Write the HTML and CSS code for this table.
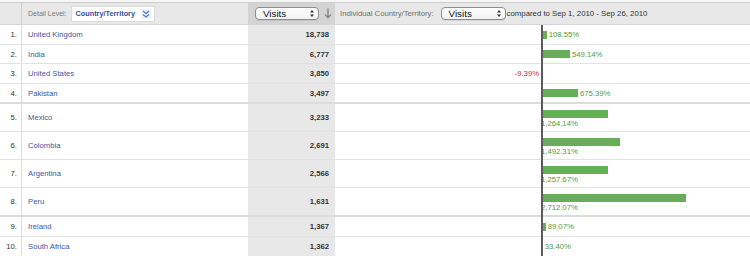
FILE: index.html
```html
<!DOCTYPE html>
<html>
<head>
<meta charset="utf-8">
<link rel="stylesheet" href="styles.css">
</head>
<body>
<div class="report">
  <div class="strip"></div>
  <div class="row head">
    <div class="c-idx"></div>
    <div class="c-name head-name">
      <span class="muted">Detail Level:</span>
      <span class="detail-box">Country/Territory
        <svg class="chev" width="10" height="10" viewBox="0 0 10 10"><path d="M2 2 L5 4.5 L8 2 M2 5.5 L5 8 L8 5.5" fill="none" stroke="#5577cc" stroke-width="1.3"/></svg>
      </span>
    </div>
    <div class="c-val head-val">
      <span class="select wide">Visits<svg class="updown" width="6" height="9" viewBox="0 0 6 9"><path d="M1 3.5 L3 1 L5 3.5 Z M1 5.5 L3 8 L5 5.5 Z" fill="#333"/></svg></span>
      <svg class="sortarrow" width="8" height="11" viewBox="0 0 8 11"><path d="M4 0.5 V9.5 M1 6.5 L4 9.8 L7 6.5" fill="none" stroke="#888" stroke-width="1.4"/></svg>
    </div>
    <div class="c-chart head-chart">
      <span class="muted2">Individual Country/Territory:</span>
      <span class="select narrow">Visits<svg class="updown" width="6" height="9" viewBox="0 0 6 9"><path d="M1 3.5 L3 1 L5 3.5 Z M1 5.5 L3 8 L5 5.5 Z" fill="#333"/></svg></span>
      <span class="cmp">compared to Sep 1, 2010 - Sep 26, 2010</span>
    </div>
  </div>

  <div class="row h20">
    <div class="c-idx">1.</div><div class="c-name">United Kingdom</div><div class="c-val">18,738</div>
    <div class="c-chart"><div class="neg"></div><div class="pos inline"><span class="bar" style="width:5.8px"></span><span class="pct">108.55%</span></div></div>
  </div>
  <div class="row h19">
    <div class="c-idx">2.</div><div class="c-name">India</div><div class="c-val">6,777</div>
    <div class="c-chart"><div class="neg"></div><div class="pos inline"><span class="bar" style="width:29px"></span><span class="pct">549.14%</span></div></div>
  </div>
  <div class="row h20">
    <div class="c-idx">3.</div><div class="c-name">United States</div><div class="c-val">3,850</div>
    <div class="c-chart"><div class="neg"><span class="npct">-9.39%</span></div><div class="pos inline"></div></div>
  </div>
  <div class="row h20 thick">
    <div class="c-idx">4.</div><div class="c-name">Pakistan</div><div class="c-val">3,497</div>
    <div class="c-chart"><div class="neg"></div><div class="pos inline"><span class="bar" style="width:37px"></span><span class="pct">675.39%</span></div></div>
  </div>
  <div class="row h28">
    <div class="c-idx">5.</div><div class="c-name">Mexico</div><div class="c-val">3,233</div>
    <div class="c-chart"><div class="neg"></div><div class="pos stack"><span class="bar" style="width:67px"></span><span class="pct">1,264.14%</span></div></div>
  </div>
  <div class="row h28">
    <div class="c-idx">6.</div><div class="c-name">Colombia</div><div class="c-val">2,691</div>
    <div class="c-chart"><div class="neg"></div><div class="pos stack"><span class="bar" style="width:79px"></span><span class="pct">1,492.31%</span></div></div>
  </div>
  <div class="row h28">
    <div class="c-idx">7.</div><div class="c-name">Argentina</div><div class="c-val">2,566</div>
    <div class="c-chart"><div class="neg"></div><div class="pos stack"><span class="bar" style="width:67px"></span><span class="pct">1,257.67%</span></div></div>
  </div>
  <div class="row h29 thick">
    <div class="c-idx">8.</div><div class="c-name">Peru</div><div class="c-val">1,631</div>
    <div class="c-chart"><div class="neg"></div><div class="pos stack"><span class="bar" style="width:145px"></span><span class="pct">2,712.07%</span></div></div>
  </div>
  <div class="row h20">
    <div class="c-idx">9.</div><div class="c-name">Ireland</div><div class="c-val">1,367</div>
    <div class="c-chart"><div class="neg"></div><div class="pos inline"><span class="bar" style="width:4.7px"></span><span class="pct">89.07%</span></div></div>
  </div>
  <div class="row h20">
    <div class="c-idx">10.</div><div class="c-name">South Africa</div><div class="c-val">1,362</div>
    <div class="c-chart"><div class="neg"></div><div class="pos inline"><span class="bar" style="width:1.8px"></span><span class="pct">33.40%</span></div></div>
  </div>

  <div class="axis"></div>
</div>
</body>
</html>
```

FILE: styles.css
```css
html, body {
  margin: 0;
  padding: 0;
  background: #fff;
}
body {
  font-family: "Liberation Sans", Arial, sans-serif;
  font-size: 7.7px;
  color: #333;
  width: 750px;
  height: 256px;
  overflow: hidden;
}
.report {
  position: relative;
  width: 750px;
}
.strip {
  height: 3px;
  background: #f6f6f6;
  border-bottom: 1px solid #cfcfcf;
  box-sizing: border-box;
}
.row {
  display: grid;
  grid-template-columns: 22px 226px 87px 415px;
  border-bottom: 1px solid #e2e2e2;
  box-sizing: border-box;
}
.row.thick {
  border-bottom: 2px solid #dcdcdc;
}
.h19 { height: 19px; }
.h20 { height: 20px; }
.h28 { height: 28px; }
.h29 { height: 29px; }

.c-idx {
  border-right: 1px solid #dcdcdc;
  display: flex;
  align-items: center;
  justify-content: flex-end;
  padding-right: 4px;
  box-sizing: border-box;
  color: #333;
}
.c-name {
  display: flex;
  align-items: center;
  padding-left: 6px;
  color: #3a58a0;
}
.c-val {
  background: #e8e8e8;
  display: flex;
  align-items: center;
  justify-content: flex-end;
  padding-right: 6px;
  font-weight: bold;
  color: #333;
}
.c-chart {
  display: grid;
  grid-template-columns: 206px 1fr;
}
.neg {
  display: flex;
  align-items: center;
  justify-content: flex-end;
  padding-right: 2px;
}
.npct {
  color: #b8354f;
}
.pos.inline {
  display: flex;
  align-items: center;
  gap: 2px;
}
.pos.stack {
  display: flex;
  flex-direction: column;
  align-items: flex-start;
  padding-top: 6px;
}
.bar {
  display: block;
  height: 8px;
  background: #66ae58;
  flex: none;
}
.pct {
  color: #4c9c3e;
  line-height: 11px;
}

/* header */
.row.head {
  height: 22px;
  background: #e8e8e8;
  border-bottom: 1px solid #d6d6d6;
}
.head .c-idx {
  border-right: 1px solid #d2d2d2;
}
.head-name {
  color: #777;
  gap: 4px;
}
.muted { color: #7a7a7a; font-size: 7px; }
.detail-box {
  display: flex;
  align-items: center;
  gap: 6px;
  height: 16px;
  box-sizing: border-box;
  background: #fff;
  border: 1px solid #dcdcdc;
  padding: 0 3px 0 4px;
  color: #34509a;
  font-weight: bold;
  font-size: 7.3px;
}
.chev {
  background: #eef2fb;
}
.head-val {
  background: #d4d4d4;
  justify-content: flex-start;
  padding-left: 7px;
  padding-right: 0;
  gap: 5px;
  font-weight: normal;
}
.select {
  display: flex;
  align-items: center;
  justify-content: space-between;
  height: 13px;
  box-sizing: border-box;
  background: linear-gradient(#ffffff, #f2f2f2);
  border: 1px solid #8e8e8e;
  border-radius: 4px;
  font-size: 9.8px;
  color: #111;
  padding: 0 3px 0 7px;
  box-shadow: 0 1px 0 rgba(0,0,0,0.08);
}
.select.wide { width: 64px; }
.select.narrow { width: 65px; }
.updown { flex: none; }
.sortarrow { flex: none; }
.head-chart {
  display: flex;
  align-items: center;
  padding-left: 5px;
}
.muted2 {
  color: #6f6f6f;
  margin-right: 7px;
}
.cmp {
  color: #333;
  margin-left: 1px;
  font-size: 7.8px;
}

.axis {
  position: absolute;
  left: 541px;
  top: 25px;
  width: 2px;
  height: 240px;
  background: #5a5a5a;
}
```
